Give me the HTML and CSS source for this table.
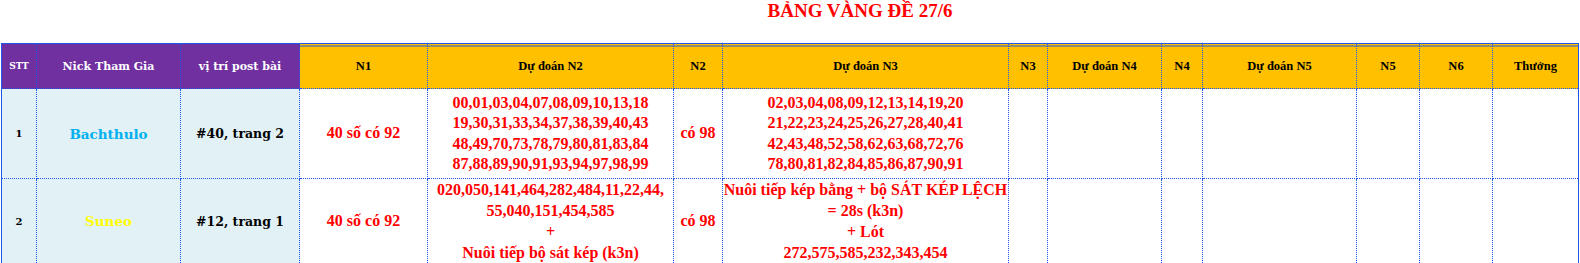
FILE: index.html
```html
<!DOCTYPE html>
<html lang="vi">
<head>
<meta charset="utf-8">
<title>Bảng vàng đề 27/6</title>
<link rel="stylesheet" href="styles.css">
</head>
<body>
<div class="title">BẢNG VÀNG ĐỀ 27/6</div>
<table class="board">
  <colgroup>
    <col class="w-stt"><col class="w-nick"><col class="w-pos"><col class="w-n1">
    <col class="w-p2"><col class="w-n2"><col class="w-p3"><col class="w-n3">
    <col class="w-p4"><col class="w-n4"><col class="w-p5"><col class="w-n5">
    <col class="w-n6"><col class="w-prize">
  </colgroup>
  <thead>
    <tr class="head">
      <th class="ph stt">STT</th>
      <th class="ph">Nick Tham Gia</th>
      <th class="ph">vị trí post bài</th>
      <th class="yh">N1</th>
      <th class="yh">Dự đoán N2</th>
      <th class="yh">N2</th>
      <th class="yh">Dự đoán N3</th>
      <th class="yh">N3</th>
      <th class="yh">Dự đoán N4</th>
      <th class="yh">N4</th>
      <th class="yh">Dự đoán N5</th>
      <th class="yh">N5</th>
      <th class="yh">N6</th>
      <th class="yh">Thưởng</th>
    </tr>
  </thead>
  <tbody>
    <tr class="row1">
      <td class="lb num">1</td>
      <td class="lb nick blue">Bachthulo</td>
      <td class="lb pos">#40, trang 2</td>
      <td class="red">40 số có 92</td>
      <td class="red">00,01,03,04,07,08,09,10,13,18<br>19,30,31,33,34,37,38,39,40,43<br>48,49,70,73,78,79,80,81,83,84<br>87,88,89,90,91,93,94,97,98,99</td>
      <td class="red">có 98</td>
      <td class="red">02,03,04,08,09,12,13,14,19,20<br>21,22,23,24,25,26,27,28,40,41<br>42,43,48,52,58,62,63,68,72,76<br>78,80,81,82,84,85,86,87,90,91</td>
      <td></td><td></td><td></td><td></td><td></td><td></td><td></td>
    </tr>
    <tr class="row2">
      <td class="lb num">2</td>
      <td class="lb nick yellow">Suneo</td>
      <td class="lb pos">#12, trang 1</td>
      <td class="red">40 số có 92</td>
      <td class="red tall">020,050,141,464,282,484,11,22,44,<br>55,040,151,454,585<br>+<br>Nuôi tiếp bộ sát kép (k3n)</td>
      <td class="red">có 98</td>
      <td class="red tall">Nuôi tiếp kép bằng + bộ SÁT KÉP LỆCH<br>= 28s (k3n)<br>+ Lót<br>272,575,585,232,343,454</td>
      <td></td><td></td><td></td><td></td><td></td><td></td><td></td>
    </tr>
  </tbody>
</table>
</body>
</html>
```

FILE: styles.css
```css
html, body {
  margin: 0;
  padding: 0;
  background: #ffffff;
}

.title {
  height: 43px;
  box-sizing: border-box;
  padding-left: 140px;
  text-align: center;
  font-family: "Liberation Serif", "Times New Roman", serif;
  font-weight: bold;
  font-size: 19px;
  line-height: 22px;
  color: #ff0000;
}

.board {
  margin-left: 1px;
  width: 1577px;
  table-layout: fixed;
  border-collapse: collapse;
  border: 1px solid #1f55e8;
}

.w-stt { width: 35px; }
.w-nick { width: 144px; }
.w-pos { width: 119px; }
.w-n1 { width: 128px; }
.w-p2 { width: 246px; }
.w-n2 { width: 49px; }
.w-p3 { width: 286px; }
.w-n3 { width: 39px; }
.w-p4 { width: 114px; }
.w-n4 { width: 41px; }
.w-p5 { width: 154px; }
.w-n5 { width: 63px; }
.w-n6 { width: 73px; }
.w-prize { width: 86px; }

.board th,
.board td {
  border: 1px dotted #1f55e8;
  padding: 0;
  text-align: center;
  vertical-align: middle;
  white-space: nowrap;
  overflow: visible;
}

.head { height: 45px; }
.row1 { height: 90px; }
.row2 { height: 84px; }

.ph {
  background: #7030a0;
  color: #ffffff;
  font-family: "DejaVu Serif", serif;
  font-weight: bold;
  font-size: 11px;
}

.ph.stt { font-size: 9px; }

.yh {
  background: linear-gradient(#ffc000 0 1px, #1f55e8 1px 2px, #ffc000 2px);
  color: #000000;
  font-family: "Liberation Serif", "Times New Roman", serif;
  font-weight: bold;
  font-size: 12.5px;
}

.lb {
  background: #e1f1f6;
  font-family: "DejaVu Serif", serif;
  font-weight: bold;
  color: #000000;
}

.num { font-size: 10px; }
.nick { font-size: 13.5px; }
.pos { font-size: 12.5px; }
.blue { color: #00b0f0; }
.yellow { color: #ffff00; }

.red {
  color: #ff0000;
  font-family: "Liberation Serif", "Times New Roman", serif;
  font-weight: bold;
  font-size: 16px;
  line-height: 20.5px;
}

.red.tall { line-height: 21px; }
```
